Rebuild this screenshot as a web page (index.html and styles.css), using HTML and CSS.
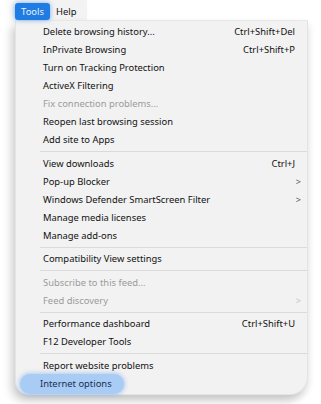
FILE: index.html
```html
<!DOCTYPE html>
<html>
<head>
<meta charset="utf-8">
<link rel="stylesheet" href="styles.css">
</head>
<body>
<div class="wrap">
  <div class="menubar">
    <span class="top active">Tools</span>
    <span class="top">Help</span>
  </div>
  <div class="menu">
    <div class="item"><span>Delete browsing history...</span><span class="key">Ctrl+Shift+Del</span></div>
    <div class="item"><span>InPrivate Browsing</span><span class="key">Ctrl+Shift+P</span></div>
    <div class="item"><span>Turn on Tracking Protection</span></div>
    <div class="item"><span>ActiveX Filtering</span></div>
    <div class="item dis"><span>Fix connection problems...</span></div>
    <div class="item"><span>Reopen last browsing session</span></div>
    <div class="item"><span>Add site to Apps</span></div>
    <div class="sep"></div>
    <div class="item"><span>View downloads</span><span class="key">Ctrl+J</span></div>
    <div class="item"><span>Pop-up Blocker</span><span class="arrow">&gt;</span></div>
    <div class="item"><span>Windows Defender SmartScreen Filter</span><span class="arrow">&gt;</span></div>
    <div class="item"><span>Manage media licenses</span></div>
    <div class="item"><span>Manage add-ons</span></div>
    <div class="sep"></div>
    <div class="item"><span>Compatibility View settings</span></div>
    <div class="sep"></div>
    <div class="item dis"><span>Subscribe to this feed...</span></div>
    <div class="item dis"><span>Feed discovery</span><span class="arrow">&gt;</span></div>
    <div class="sep"></div>
    <div class="item"><span>Performance dashboard</span><span class="key">Ctrl+Shift+U</span></div>
    <div class="item"><span>F12 Developer Tools</span></div>
    <div class="sep"></div>
    <div class="item"><span>Report website problems</span></div>
    <div class="item hl"><span class="pill">Internet options</span></div>
  </div>
</div>
</body>
</html>
```
FILE: styles.css
```css
html, body {
  margin: 0;
  padding: 0;
  background: #ffffff;
}
body {
  font-family: "Noto Sans", "Open Sans", sans-serif;
  font-size: 9.4px;
  color: #111111;
  width: 321px;
  height: 404px;
  overflow: hidden;
}
.wrap {
  padding: 0 0 0 15px;
}
.menubar {
  display: flex;
  align-items: center;
  gap: 2px;
  height: 20px;
  width: 72px;
  background: #f3f3f3;
  box-shadow: -4px 0 8px rgba(0,0,0,0.08);
  padding-top: 3px;
  box-sizing: border-box;
}
.top {
  display: inline-block;
  height: 17px;
  line-height: 17px;
  padding: 0 4px;
  border-radius: 3px;
}
.top.active {
  background: #1f7ce3;
  color: #e9f2fc;
  width: 35px;
  padding: 0;
  text-align: center;
  box-shadow: 0 0 5px rgba(31,124,227,0.6);
}
.menu {
  width: 293px;
  background: #f2f2f2;
  border: 1px solid #e4e4e4;
  border-top-color: #e8e8e8;
  border-radius: 0 0 18px 14px;
  box-sizing: border-box;
  padding: 2px 0 1px 0;
  box-shadow: -4px 6px 10px rgba(0,0,0,0.18), 2px 4px 6px rgba(0,0,0,0.06);
}
.item {
  height: 18px;
  line-height: 18px;
  display: flex;
  justify-content: space-between;
  padding: 0 12px 0 27px;
  white-space: nowrap;
}
.item.dis {
  color: #9b9b9b;
}
.key {
  color: #111111;
}
.arrow {
  font-size: 9px;
  margin-right: -6px;
  color: #555;
}
.dis .arrow {
  color: #c2c2c2;
}
.sep {
  height: 1px;
  background: #dadada;
  margin: 2px 0 2.5px 24px;
}
.item.hl {
  padding-left: 4px;
}
.pill {
  display: inline-block;
  height: 20px;
  line-height: 20px;
  margin-top: -1px;
  padding: 0 12px 0 20px;
  border-radius: 10px;
  background: #a8ccf4;
  color: #1d2f55;
  box-shadow: 0 0 4px 1px rgba(120,170,235,0.55);
}
```
